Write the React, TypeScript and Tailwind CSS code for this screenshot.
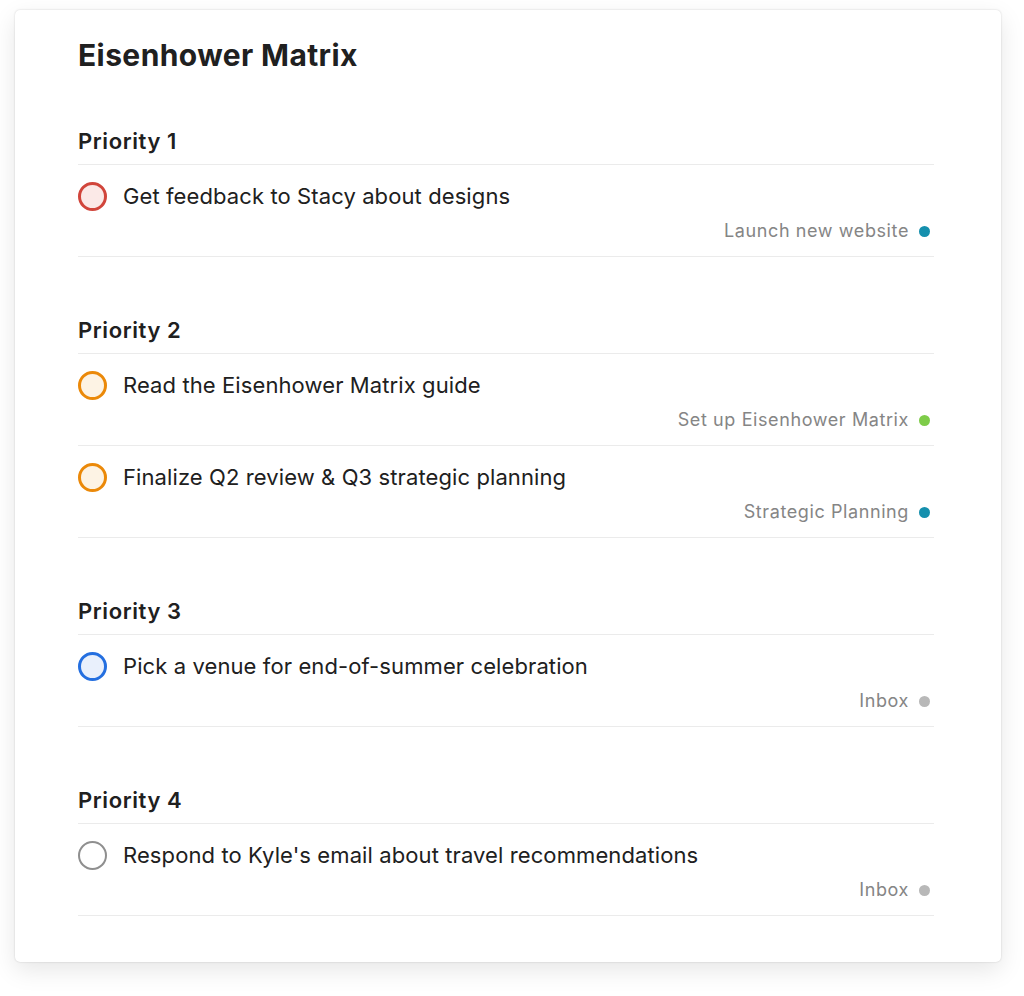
const sections = [
  {
    title: "Priority 1",
    tasks: [
      { text: "Get feedback to Stacy about designs", project: "Launch new website", dot: "bg-[#158fad]", ring: "border-[3px] border-[#d1453b] bg-[#fbe9e7]" },
    ],
  },
  {
    title: "Priority 2",
    tasks: [
      { text: "Read the Eisenhower Matrix guide", project: "Set up Eisenhower Matrix", dot: "bg-[#7ecc49]", ring: "border-[3px] border-[#eb8909] bg-[#fdf3e4]" },
      { text: "Finalize Q2 review & Q3 strategic planning", project: "Strategic Planning", dot: "bg-[#158fad]", ring: "border-[3px] border-[#eb8909] bg-[#fdf3e4]" },
    ],
  },
  {
    title: "Priority 3",
    tasks: [
      { text: "Pick a venue for end-of-summer celebration", project: "Inbox", dot: "bg-[#b8b8b8]", ring: "border-[3px] border-[#246fe0] bg-[#e9f0fc]" },
    ],
  },
  {
    title: "Priority 4",
    tasks: [
      { text: "Respond to Kyle's email about travel recommendations", project: "Inbox", dot: "bg-[#b8b8b8]", ring: "border-2 border-[#8f8f8f] bg-white" },
    ],
  },
];

function TaskRow({ task }: { task: (typeof sections)[number]["tasks"][number] }) {
  return (
    <div className="border-b border-[#ebebeb] pt-[17px] pb-[13px]">
      <div className="flex h-[28px] items-center gap-[16px]">
        <span className={`box-border h-[29px] w-[29px] shrink-0 rounded-full ${task.ring}`} />
        <span className="text-[22px] leading-[28px] tracking-[0.1px] text-[#202020]">{task.text}</span>
      </div>
      <div className="mt-[9px] flex h-[24px] items-center justify-end gap-[10px] pr-[4px]">
        <span className="text-[18px] leading-[24px] tracking-[0.6px] text-[#858585]">{task.project}</span>
        <span className={`h-[11px] w-[11px] rounded-full ${task.dot}`} />
      </div>
    </div>
  );
}

export default function App() {
  return (
    <div className="min-h-[996px] bg-white pt-[10px] pl-[15px] font-['Inter','Noto_Sans',sans-serif]">
      <div className="w-[986px] h-[952px] rounded-[5px] bg-white pt-[27px] pl-[63px] pr-[67px] shadow-[0_0_2px_rgba(0,0,0,0.18),0_8px_24px_rgba(0,0,0,0.10)]">
        <h1 className="text-[30px] leading-[36px] font-bold tracking-[0.4px] text-[#202020]">Eisenhower Matrix</h1>
        <div className="mt-[54px] flex flex-col gap-[59px]">
          {sections.map((s) => (
            <section key={s.title}>
              <h2 className="border-b border-[#ebebeb] pb-[9px] text-[22px] leading-[28px] font-semibold tracking-[0.6px] text-[#202020]">
                {s.title}
              </h2>
              {s.tasks.map((t) => (
                <TaskRow key={t.text} task={t} />
              ))}
            </section>
          ))}
        </div>
      </div>
    </div>
  );
}
